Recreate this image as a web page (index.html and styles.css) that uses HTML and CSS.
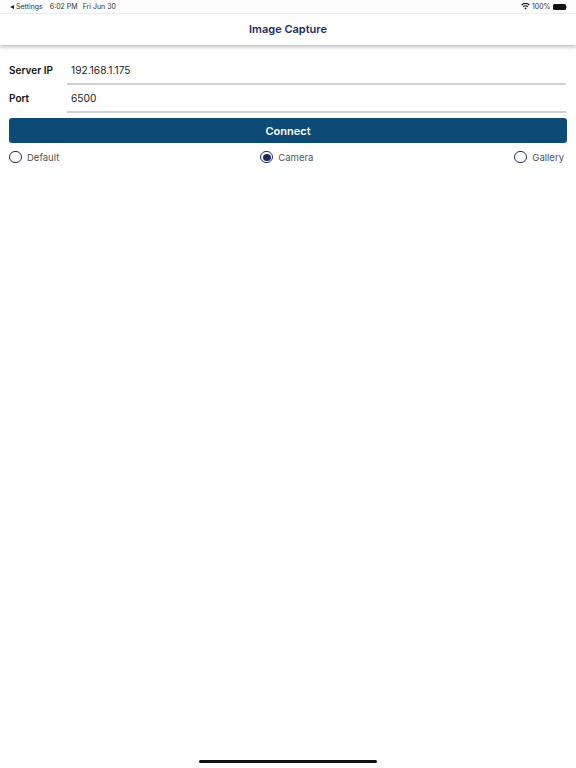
FILE: index.html
```html
<!DOCTYPE html>
<html lang="en">
<head>
<meta charset="utf-8">
<title>Image Capture</title>
<link rel="stylesheet" href="styles.css">
</head>
<body>
<div class="screen">
  <header class="header">
    <div class="status">
      <div class="status-left">
        <span class="back-arrow"></span>
        <span>Settings</span>
        <span class="time">6:02 PM</span>
        <span class="date">Fri Jun 30</span>
      </div>
      <div class="status-right">
        <svg class="wifi" viewBox="0 0 16 12" width="9" height="7"><path d="M8 11.5 L10.3 8.7 A3.6 3.6 0 0 0 5.7 8.7 Z M4.4 7.2 A5.6 5.6 0 0 1 11.6 7.2 L12.9 5.7 A7.6 7.6 0 0 0 3.1 5.7 Z M1.8 4.2 A9.6 9.6 0 0 1 14.2 4.2 L15.6 2.6 A11.8 11.8 0 0 0 0.4 2.6 Z" fill="#111"/></svg>
        <span>100%</span>
        <span class="battery"></span>
        <span class="battery-tip"></span>
      </div>
    </div>
    <h1 class="title">Image Capture</h1>
  </header>
  <main class="content">
    <div class="field">
      <label class="field-label">Server IP</label>
      <div class="field-value">192.168.1.175</div>
    </div>
    <div class="field">
      <label class="field-label">Port</label>
      <div class="field-value">6500</div>
    </div>
    <button class="connect">Connect</button>
    <div class="radios">
      <div class="radio"><span class="radio-circle"></span><span>Default</span></div>
      <div class="radio"><span class="radio-circle checked"></span><span>Camera</span></div>
      <div class="radio"><span class="radio-circle"></span><span>Gallery</span></div>
    </div>
  </main>
  <div class="home-indicator"></div>
</div>
</body>
</html>
```

FILE: styles.css
```css
* { box-sizing: border-box; }
html, body { margin: 0; padding: 0; background: #fff; }
.screen {
  width: 576px;
  height: 768px;
  display: flex;
  flex-direction: column;
  font-family: Inter, "Liberation Sans", sans-serif;
  position: relative;
  overflow: hidden;
  background: #fff;
}
.header {
  height: 45px;
  background: #fff;
  box-shadow: 0 2px 4px rgba(0,0,0,0.25);
  display: flex;
  flex-direction: column;
}
.status {
  height: 13.5px;
  background: #fdfdfd;
  border-bottom: 1px solid #ececec;
  display: flex;
  justify-content: space-between;
  align-items: center;
  padding: 1px 9px 0 10px;
  font-size: 7px;
  color: #333;
}
.status-left { display: flex; align-items: center; gap: 2px; }
.back-arrow {
  width: 0;
  height: 0;
  border-top: 2.5px solid transparent;
  border-bottom: 2.5px solid transparent;
  border-right: 4px solid #222;
}
.time { margin-left: 5px; }
.date { margin-left: 3px; }
.status-right { display: flex; align-items: center; gap: 2px; }
.battery {
  width: 13px;
  height: 6px;
  border-radius: 1.5px;
  background: #111;
  display: block;
}
.battery-tip {
  width: 1px;
  height: 2px;
  background: #999;
  margin-left: -1.5px;
}
.title {
  margin: 0;
  flex: 1;
  display: flex;
  align-items: center;
  justify-content: center;
  font-size: 11px;
  font-weight: 600;
  color: #1f2a63;
}
.content {
  padding: 12px 9px 0;
  display: flex;
  flex-direction: column;
}
.field {
  height: 28px;
  display: flex;
  align-items: center;
}
.field-label {
  width: 58px;
  padding-bottom: 2px;
  font-size: 10px;
  font-weight: 600;
  color: #111;
}
.field-value {
  width: 499px;
  height: 28px;
  display: flex;
  align-items: center;
  padding-left: 4px;
  font-size: 10.2px;
  color: #222;
  border-bottom: 2px solid #d0d0d0;
}
.connect {
  margin-top: 5px;
  height: 25px;
  width: 558px;
  border: 0;
  border-radius: 3px;
  background: #0d4a75;
  color: #fff;
  font: 600 11px Inter, "Liberation Sans", sans-serif;
  padding: 0;
}
.radios {
  display: flex;
  justify-content: space-between;
  align-items: center;
  height: 28px;
  padding-right: 3px;
}
.radio {
  display: flex;
  align-items: center;
  gap: 5.5px;
  font-size: 9.5px;
  color: #555;
}
.radio-circle {
  width: 12.5px;
  height: 12.5px;
  border-radius: 50%;
  border: 1.5px solid #1f2a63;
  padding: 1.5px;
  background-clip: content-box;
}
.radio-circle.checked { background-color: #1f2a63; }
.home-indicator {
  position: absolute;
  left: 199px;
  top: 760px;
  width: 178px;
  height: 3px;
  border-radius: 2px;
  background: #111;
}
```
